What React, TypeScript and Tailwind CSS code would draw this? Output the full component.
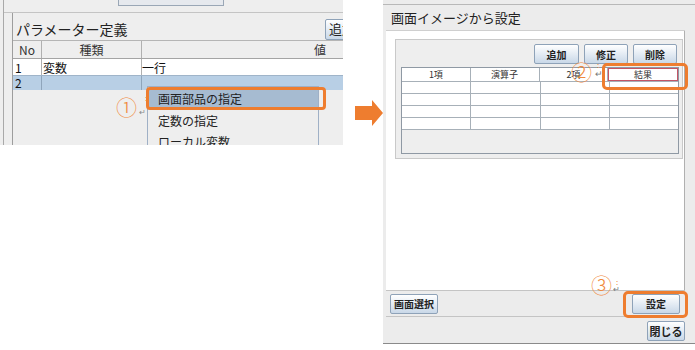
import React from "react"

const jp = { fontFamily: '"Noto Sans CJK JP", "Noto Sans", sans-serif' }

function JavaButton({ label, className = "" }: { label: string; className?: string }) {
  return (
    <div
      className={`flex items-center justify-center h-[20px] rounded-[2px] border border-[#8ea2b8] bg-gradient-to-b from-[#ffffff] to-[#c9d8e8] text-[10px] font-bold text-[#222] ${className}`}
    >
      {label}
    </div>
  )
}

function ParamScreen() {
  return (
    <div className="relative w-[343px] h-[145px] overflow-hidden bg-[#eeeeee] pl-[3px]">
      <div className="h-full border-l border-[#a9a9a9]">
        {/* top tab strip */}
        <div className="h-[13px] border-b border-[#c4c4c4]">
          <div className="ml-[114px] w-[106px] h-[6px] border-b border-x border-[#9aa7b6] bg-[#e6e9ee]" />
        </div>

        {/* panel */}
        <div className="ml-[8px] h-full border-l border-[#9d9d9d] bg-[#eeeeee]">
          <div className="flex h-[27px] items-center">
            <span className="pl-[3px] pt-[5px] text-[14px] text-[#222]">パラメーター定義</span>
            <JavaButton
              label="追加"
              className="ml-auto -mr-[26px] shrink-0 w-[44px] h-[21px] mt-[5px] justify-start pl-[3px] text-[13px] font-normal"
            />
          </div>

          {/* table */}
          <div className="border-t border-[#b5b5b5]">
            <div className="flex h-[18px] items-center text-[12px] text-[#333] border-b border-[#a4a4a4]">
              <div className="w-[29px] h-full flex items-center justify-center border-r border-[#b0b0b0]">No</div>
              <div className="w-[100px] h-full flex items-center justify-center border-r border-[#b0b0b0]">種類</div>
              <div className="flex-1 h-full flex items-center justify-end pr-[17px]">値</div>
            </div>
            <div className="flex h-[16px] items-center text-[12px] text-[#111] bg-white">
              <div className="w-[29px] h-full pl-[2px] border-r border-[#b0b0b0]">1</div>
              <div className="w-[100px] h-full pl-[1px] border-r border-[#b0b0b0]">変数</div>
              <div className="flex-1 h-full">一行</div>
            </div>
            <div className="flex h-[15px] items-center text-[12px] text-[#111] bg-[#b8cfe5] border-t border-[#9fb4c9]">
              <div className="w-[29px] h-full pl-[2px] border-r border-[#8fa5bb] leading-[14px]">2</div>
              <div className="w-[100px] h-full border-r border-[#8fa5bb]" />
              <div className="flex-1 h-full" />
            </div>
          </div>
        </div>
      </div>

      {/* context menu */}
      <div className="absolute left-[147px] top-[86px] w-[172px] h-[70px] border border-[#9fb0c6] bg-[#eeeeee] pt-[2px] text-[12px] text-[#222]">
        <div className="h-[20px] bg-[#a6bbd1] pl-[10px] leading-[20px]">画面部品の指定</div>
        <div className="h-[21px] pl-[10px] leading-[21px] mt-[1px]">定数の指定</div>
        <div className="h-[21px] pl-[10px] leading-[21px]">ローカル変数</div>
      </div>

      {/* annotation 1 */}
      <div className="absolute left-[146px] top-[87px] w-[180px] h-[23px] border-[3px] border-[#ee7d2f] rounded-[4px]" />
      <div className="absolute left-[116px] top-[94px] text-[21px] leading-[24px] font-light text-[#f08a3c]">①</div>
      <div className="absolute left-[145px] top-[94px] text-[8px] leading-[8px] text-[#f08a3c]">:</div>
      <div className="absolute left-[139px] top-[108px] text-[8px] leading-[8px] text-[#888]">↵</div>
    </div>
  )
}

function Arrow() {
  return (
    <div className="w-[40px] pt-[100px] pl-[12px]">
      <svg width="28" height="26" viewBox="0 0 28 26">
        <path d="M0 6 H17 V0 L28 13 L17 26 V20 H0 Z" fill="#ee7d2f" />
      </svg>
    </div>
  )
}

function ExpressionDialog() {
  const cols = ["1項", "演算子", "2項", "結果"]
  return (
    <div className="relative w-[312px] h-[344px] bg-[#ececec] pt-[4px] border-b border-[#8a8a8a]">
      <div className="h-full border-t border-[#b8b8b8] pl-[3px] pr-[10px] flex flex-col">
        <div className="h-[26px] flex items-center pl-[5px] text-[13px] text-[#222] border-b border-[#cfcfcf]">
          画面イメージから設定
        </div>

        {/* white content area */}
        <div className="h-[259px] bg-white border-r border-[#b0b0b0] pt-[8px] pl-[9px] pr-[1px]">
          <div className="h-[120px] bg-[#eeeeee] border border-[#c9c9c9] px-[5px] pt-[4px]">
            <div className="flex justify-end gap-[5px]">
              <JavaButton label="追加" className="w-[45px]" />
              <JavaButton label="修正" className="w-[44px]" />
              <JavaButton label="削除" className="w-[44px]" />
            </div>
            <div className="mt-[3px] w-[278px] h-[87px] border border-[#8f99a4] bg-[#eeeeee]">
              <div className="flex h-[14px] bg-white border-b border-[#a7b0b8]">
                {cols.map((c, i) => (
                  <div
                    key={c}
                    className={`flex-1 flex items-center justify-center text-[9px] text-[#333] ${
                      i < 3 ? "border-r border-[#a7b0b8]" : "border border-[#c45566]"
                    }`}
                  >
                    {c}
                  </div>
                ))}
              </div>
              {[0, 1, 2, 3].map((r) => (
                <div key={r} className="flex h-[12px] bg-white border-b border-[#a7b0b8]">
                  {cols.map((c, i) => (
                    <div key={c} className={`flex-1 ${i < 3 ? "border-r border-[#a7b0b8]" : ""}`} />
                  ))}
                </div>
              ))}
            </div>
          </div>
        </div>

        {/* action bar */}
        <div className="h-[27px] flex items-center justify-between border-t border-[#c4c4c4] border-b border-b-[#c4c4c4] pl-[4px] pr-[5px]">
          <JavaButton label="画面選択" className="w-[48px] h-[19px]" />
          <JavaButton label="設定" className="w-[48px] h-[19px]" />
        </div>
        <div className="flex-1 flex items-start justify-end pt-[4px]">
          <JavaButton label="閉じる" className="w-[38px] h-[19px] text-[11px]" />
        </div>
      </div>

      {/* annotations */}
      <div className="absolute left-[219px] top-[63px] w-[86px] h-[27px] border-[3px] border-[#ee7d2f] rounded-[5px]" />
      <div className="absolute left-[188px] top-[59px] text-[21px] leading-[24px] font-light text-[#f08a3c]">②</div>
      <div className="absolute left-[214px] top-[61px] text-[8px] leading-[8px] text-[#f08a3c]">:</div>
      <div className="absolute left-[212px] top-[69px] text-[9px] leading-[9px] text-[#777]">↵</div>

      <div className="absolute left-[240px] top-[291px] w-[65px] h-[27px] border-[3px] border-[#ee7d2f] rounded-[5px]" />
      <div className="absolute left-[208px] top-[272px] text-[21px] leading-[24px] font-light text-[#f08a3c]">③</div>
      <div className="absolute left-[233px] top-[278px] text-[8px] leading-[8px] text-[#f08a3c]">:</div>
      <div className="absolute left-[230px] top-[285px] text-[8px] leading-[8px] text-[#777]">↵</div>
    </div>
  )
}

export default function App() {
  return (
    <div className="w-[695px] h-[350px] bg-white flex overflow-hidden" style={jp}>
      <ParamScreen />
      <Arrow />
      <ExpressionDialog />
    </div>
  )
}
